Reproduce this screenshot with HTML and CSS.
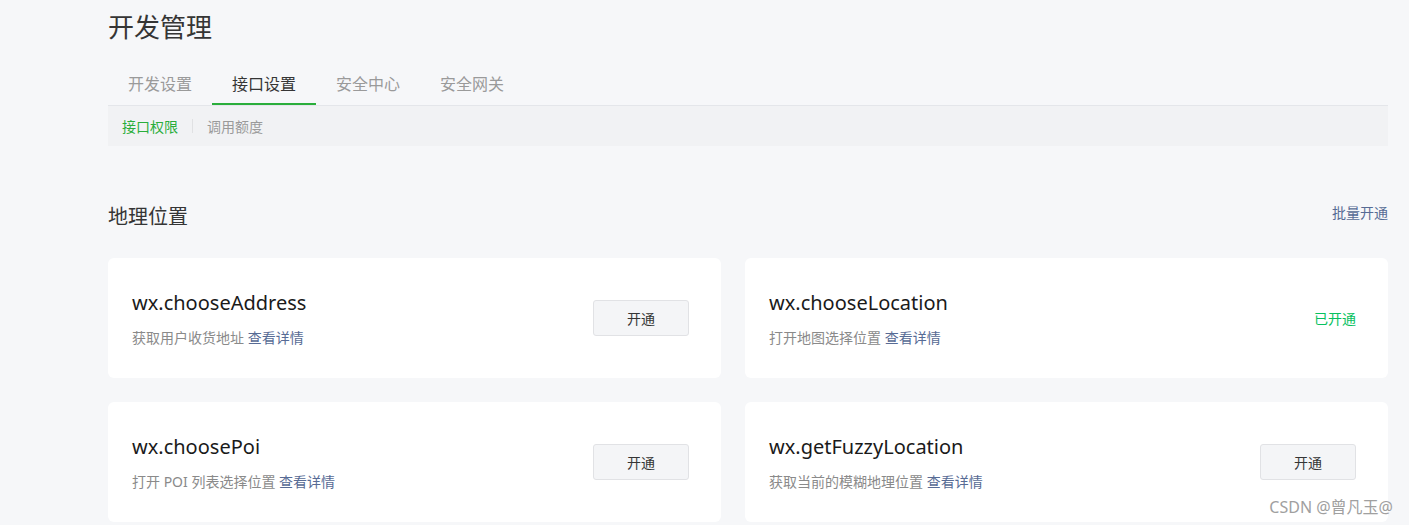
FILE: index.html
```html
<!DOCTYPE html>
<html lang="zh-CN">
<head>
    <meta charset="UTF-8">
    <meta name="viewport" content="width=device-width, initial-scale=1.0">
    <title>开发管理</title>
    <link rel="stylesheet" href="styles.css">
</head>
<body>
    <div class="page">
        <h1 class="page-title">开发管理</h1>

        <ul class="tabs">
            <li class="tab">开发设置</li>
            <li class="tab active">接口设置</li>
            <li class="tab">安全中心</li>
            <li class="tab">安全网关</li>
        </ul>

        <div class="subnav">
            <span class="subnav-item current">接口权限</span>
            <span class="subnav-sep"></span>
            <span class="subnav-item">调用额度</span>
        </div>

        <div class="section-head">
            <h2 class="section-title">地理位置</h2>
            <a class="link batch">批量开通</a>
        </div>

        <div class="card-grid">
            <div class="card">
                <div class="card-info">
                    <div class="api-name">wx.chooseAddress</div>
                    <div class="api-desc">获取用户收货地址 <a class="link">查看详情</a></div>
                </div>
                <button class="btn">开通</button>
            </div>
            <div class="card">
                <div class="card-info">
                    <div class="api-name">wx.chooseLocation</div>
                    <div class="api-desc">打开地图选择位置 <a class="link">查看详情</a></div>
                </div>
                <span class="status">已开通</span>
            </div>
            <div class="card">
                <div class="card-info">
                    <div class="api-name">wx.choosePoi</div>
                    <div class="api-desc">打开 POI 列表选择位置 <a class="link">查看详情</a></div>
                </div>
                <button class="btn">开通</button>
            </div>
            <div class="card">
                <div class="card-info">
                    <div class="api-name">wx.getFuzzyLocation</div>
                    <div class="api-desc">获取当前的模糊地理位置 <a class="link">查看详情</a></div>
                </div>
                <button class="btn">开通</button>
            </div>
        </div>
    </div>

    <div class="watermark">CSDN @曾凡玉@</div>
</body>
</html>
```

FILE: styles.css
```css
body {
    margin: 0;
    background-color: #f6f7f9;
    font-family: "Noto Sans", "Noto Sans CJK SC", sans-serif;
    color: #353535;
}
.page {
    width: 1280px;
    margin-left: 108px;
}
.page-title {
    margin: 9px 0 0;
    font-size: 26px;
    line-height: 36px;
    font-weight: 400;
    color: #353535;
}
.tabs {
    display: flex;
    list-style: none;
    margin: 27px 0 0;
    padding: 0;
    border-bottom: 1px solid #e4e6ea;
}
.tab {
    padding: 0 20px 7px;
    font-size: 16px;
    line-height: 24px;
    color: #9a9a9a;
    border-bottom: 2px solid transparent;
}
.tab.active {
    color: #353535;
    border-bottom-color: #2aae3b;
}
.subnav {
    display: flex;
    align-items: center;
    height: 40px;
    padding-left: 14px;
    background-color: #f1f2f4;
    font-size: 14px;
}
.subnav-item {
    color: #9a9a9a;
}
.subnav-item.current {
    color: #2aae3b;
}
.subnav-sep {
    width: 1px;
    height: 14px;
    margin: 0 14px;
    background-color: #e0e1e3;
}
.section-head {
    display: flex;
    justify-content: space-between;
    align-items: flex-start;
    margin-top: 57px;
}
.section-title {
    margin: 0;
    font-size: 20px;
    line-height: 28px;
    font-weight: 400;
    color: #353535;
}
.link {
    color: #576b95;
    cursor: pointer;
}
.batch {
    font-size: 14px;
    line-height: 20px;
}
.card-grid {
    display: grid;
    grid-template-columns: 613px 643px;
    grid-auto-rows: 120px;
    gap: 24px;
    margin-top: 27px;
}
.card {
    display: flex;
    align-items: center;
    justify-content: space-between;
    padding: 0 32px 0 24px;
    background-color: #fff;
    border-radius: 6px;
}
.api-name {
    font-size: 20px;
    line-height: 28px;
    color: #1a1a1a;
}
.api-desc {
    margin-top: 11px;
    font-size: 14px;
    line-height: 20px;
    color: #8a8a8a;
}
.btn {
    width: 96px;
    height: 36px;
    font-family: inherit;
    font-size: 14px;
    color: #353535;
    background-color: #f4f5f7;
    border: 1px solid #e1e2e5;
    border-radius: 3px;
}
.status {
    font-size: 14px;
    color: #07c160;
}
.watermark {
    position: absolute;
    right: 16px;
    bottom: 6px;
    font-size: 16px;
    line-height: 24px;
    color: #a0a0a0;
}
```
